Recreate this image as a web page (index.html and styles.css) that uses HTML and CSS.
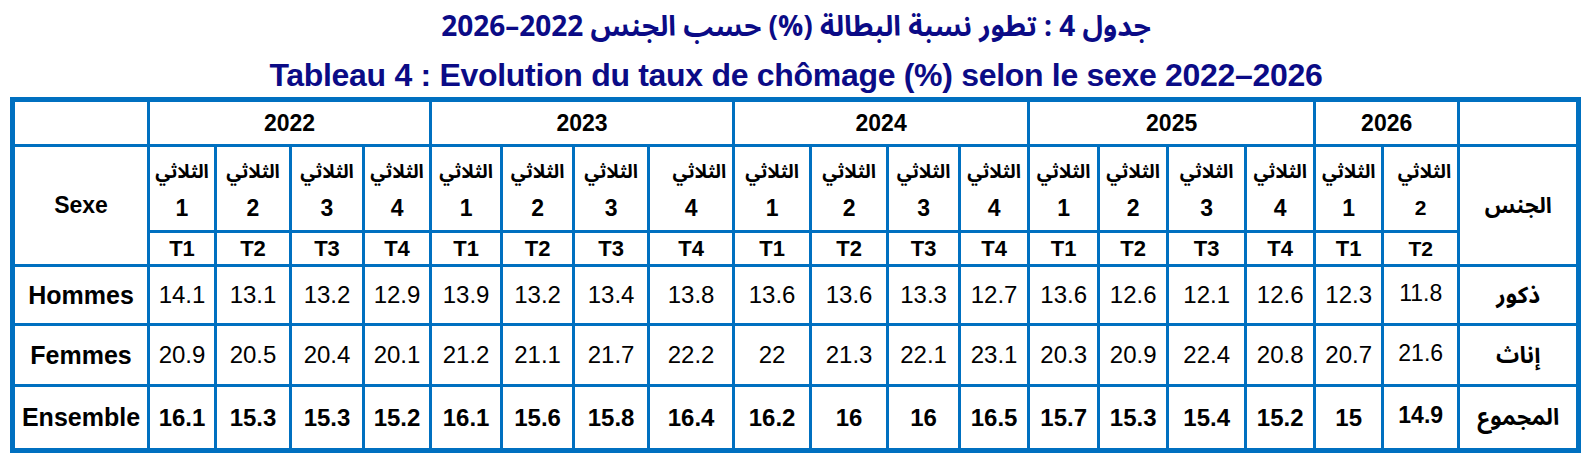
FILE: index.html
```html
<!DOCTYPE html>
<html lang="fr">
<head>
<meta charset="utf-8">
<title>Tableau 4</title>
<link rel="stylesheet" href="styles.css">
</head>
<body>
<div class="page">
  <h1 class="title-ar" dir="rtl">جدول 4 : تطور نسبة البطالة (%) حسب الجنس 2022–2026</h1>
  <h2 class="title-fr">Tableau 4 : Evolution du taux de chômage (%) selon le sexe 2022–2026</h2>
  <table class="grid">
    <colgroup>
      <col class="c-label-l">
      <col style="width:67px"><col style="width:75px"><col style="width:73px"><col style="width:67px">
      <col style="width:71px"><col style="width:72px"><col style="width:75px"><col style="width:85px">
      <col style="width:77px"><col style="width:77px"><col style="width:72px"><col style="width:69px">
      <col style="width:70px"><col style="width:69px"><col style="width:78px"><col style="width:69px">
      <col style="width:68px"><col style="width:76px">
      <col class="c-label-r">
    </colgroup>
    <tbody>
      <tr class="r-year">
        <td></td>
        <td class="year" colspan="4">2022</td>
        <td class="year" colspan="4">2023</td>
        <td class="year" colspan="4">2024</td>
        <td class="year" colspan="4">2025</td>
        <td class="year" colspan="2">2026</td>
        <td></td>
      </tr>
      <tr class="r-quarter">
        <td class="lab-fr sexe" rowspan="2">Sexe</td>
        <td class="q"><span class="ar">الثلاثي</span><span class="n">1</span></td>
        <td class="q"><span class="ar">الثلاثي</span><span class="n">2</span></td>
        <td class="q"><span class="ar">الثلاثي</span><span class="n">3</span></td>
        <td class="q"><span class="ar">الثلاثي</span><span class="n">4</span></td>
        <td class="q"><span class="ar">الثلاثي</span><span class="n">1</span></td>
        <td class="q"><span class="ar">الثلاثي</span><span class="n">2</span></td>
        <td class="q"><span class="ar">الثلاثي</span><span class="n">3</span></td>
        <td class="q q-right"><span class="ar">الثلاثي</span><span class="n">4</span></td>
        <td class="q"><span class="ar">الثلاثي</span><span class="n">1</span></td>
        <td class="q"><span class="ar">الثلاثي</span><span class="n">2</span></td>
        <td class="q"><span class="ar">الثلاثي</span><span class="n">3</span></td>
        <td class="q"><span class="ar">الثلاثي</span><span class="n">4</span></td>
        <td class="q"><span class="ar">الثلاثي</span><span class="n">1</span></td>
        <td class="q"><span class="ar">الثلاثي</span><span class="n">2</span></td>
        <td class="q"><span class="ar">الثلاثي</span><span class="n">3</span></td>
        <td class="q"><span class="ar">الثلاثي</span><span class="n">4</span></td>
        <td class="q"><span class="ar">الثلاثي</span><span class="n">1</span></td>
        <td class="q q-right small"><span class="ar">الثلاثي</span><span class="n">2</span></td>
        <td class="lab-ar jins" rowspan="2" dir="rtl">الجنس</td>
      </tr>
      <tr class="r-t">
        <td class="t">T1</td><td class="t">T2</td><td class="t">T3</td><td class="t">T4</td>
        <td class="t">T1</td><td class="t">T2</td><td class="t">T3</td><td class="t">T4</td>
        <td class="t">T1</td><td class="t">T2</td><td class="t">T3</td><td class="t">T4</td>
        <td class="t">T1</td><td class="t">T2</td><td class="t">T3</td><td class="t">T4</td>
        <td class="t">T1</td><td class="t small">T2</td>
      </tr>
      <tr class="r-h">
        <td class="lab-fr">Hommes</td>
        <td class="v">14.1</td><td class="v">13.1</td><td class="v">13.2</td><td class="v">12.9</td>
        <td class="v">13.9</td><td class="v">13.2</td><td class="v">13.4</td><td class="v">13.8</td>
        <td class="v">13.6</td><td class="v">13.6</td><td class="v">13.3</td><td class="v">12.7</td>
        <td class="v">13.6</td><td class="v">12.6</td><td class="v">12.1</td><td class="v">12.6</td>
        <td class="v">12.3</td><td class="v small">11.8</td>
        <td class="lab-ar" dir="rtl">ذكور</td>
      </tr>
      <tr class="r-f">
        <td class="lab-fr">Femmes</td>
        <td class="v">20.9</td><td class="v">20.5</td><td class="v">20.4</td><td class="v">20.1</td>
        <td class="v">21.2</td><td class="v">21.1</td><td class="v">21.7</td><td class="v">22.2</td>
        <td class="v">22</td><td class="v">21.3</td><td class="v">22.1</td><td class="v">23.1</td>
        <td class="v">20.3</td><td class="v">20.9</td><td class="v">22.4</td><td class="v">20.8</td>
        <td class="v">20.7</td><td class="v small">21.6</td>
        <td class="lab-ar" dir="rtl">إناث</td>
      </tr>
      <tr class="r-e">
        <td class="lab-fr">Ensemble</td>
        <td class="v b">16.1</td><td class="v b">15.3</td><td class="v b">15.3</td><td class="v b">15.2</td>
        <td class="v b">16.1</td><td class="v b">15.6</td><td class="v b">15.8</td><td class="v b">16.4</td>
        <td class="v b">16.2</td><td class="v b">16</td><td class="v b">16</td><td class="v b">16.5</td>
        <td class="v b">15.7</td><td class="v b">15.3</td><td class="v b">15.4</td><td class="v b">15.2</td>
        <td class="v b">15</td><td class="v b small">14.9</td>
        <td class="lab-ar" dir="rtl">المجموع</td>
      </tr>
    </tbody>
  </table>
</div>
</body>
</html>
```
FILE: styles.css
```css
html, body {
  margin: 0;
  padding: 0;
  background: #ffffff;
}

.page {
  padding: 3px 0 0 10px;
  width: 1582px;
  box-sizing: border-box;
}

.title-ar {
  margin: 0;
  height: 50px;
  line-height: 50px;
  text-align: center;
  font-family: "Noto Sans Arabic", "DejaVu Sans", "Liberation Sans", sans-serif;
  font-weight: 700;
  font-size: 28px;
  color: #0b0b86;
}

.title-fr {
  margin: 0;
  height: 44px;
  line-height: 44px;
  text-align: center;
  font-family: "Liberation Sans", sans-serif;
  font-weight: 700;
  font-size: 32px;
  letter-spacing: -0.3px;
  color: #0b0b86;
}

.grid {
  border-collapse: collapse;
  table-layout: fixed;
  width: 1566px;
  border: 5px solid #0070c0;
  font-family: "Liberation Sans", Arial, sans-serif;
  color: #000;
}

.c-label-l { width: 136px; }
.c-label-r { width: 120px; }

.grid td {
  border: 3px solid #0070c0;
  padding: 0;
  text-align: center;
  vertical-align: middle;
  overflow: hidden;
  white-space: nowrap;
}

.r-year { height: 46px; }
.r-quarter { height: 86px; }
.r-t { height: 34px; }
.r-h { height: 59px; }
.r-f { height: 61px; }
.r-e { height: 65px; }

.year {
  font-weight: 700;
  font-size: 23px;
}

.q .ar {
  display: block;
  font-family: "Noto Sans Arabic", "DejaVu Sans", sans-serif;
  font-weight: 700;
  font-size: 19px;
  line-height: 38px;
  direction: rtl;
}

.q .n {
  display: block;
  font-weight: 700;
  font-size: 23px;
  line-height: 34px;
}

.q-right .ar {
  text-align: right;
  padding-right: 6px;
}

.t {
  font-weight: 700;
  font-size: 22px;
}

.lab-fr {
  font-weight: 700;
  font-size: 25px;
}

.sexe {
  font-size: 23px;
}

.lab-ar {
  font-family: "Noto Sans Arabic", "DejaVu Sans", sans-serif;
  font-weight: 700;
  font-size: 23px;
}

.jins {
  font-size: 22px;
}

.v {
  font-size: 24px;
}

.v.b {
  font-weight: 700;
}

.v.small {
  font-size: 23px;
  padding-bottom: 4px;
}

.t.small, .q.small .n {
  font-size: 21px;
}
```
